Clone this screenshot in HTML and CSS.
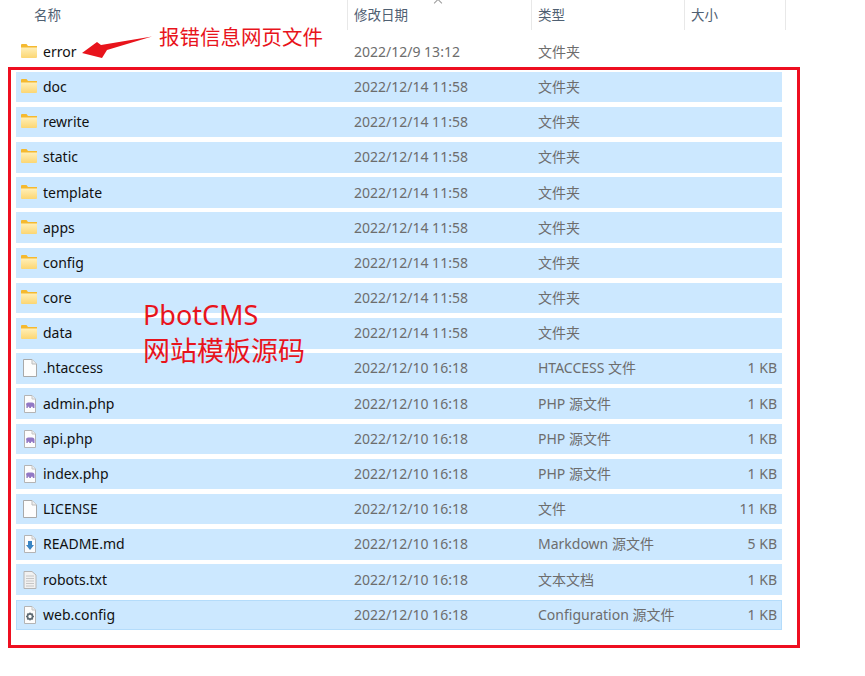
FILE: index.html
```html
<!DOCTYPE html>
<html lang="en">
<head>
    <meta charset="UTF-8">
    <meta name="viewport" content="width=device-width, initial-scale=1.0">
    <title>PbotCMS 文件列表</title>
    <link rel="stylesheet" href="styles.css">
</head>
<body>
    <!-- Icon sheet -->
    <svg class="icon-sheet" width="0" height="0">
        <defs>
            <linearGradient id="folderFill" x1="0" y1="0" x2="0" y2="1">
                <stop offset="0" stop-color="#ffefb8"/>
                <stop offset="1" stop-color="#fcd672"/>
            </linearGradient>
            <symbol id="i-folder" viewBox="0 0 16 14">
                <path d="M0 1 Q0 0 1 0 H5.5 L7 2 H16 V5 H0 Z" fill="#f5b92f"/>
                <path d="M0 3.5 H16 V13 Q16 14 15 14 H1 Q0 14 0 13 Z" fill="url(#folderFill)"/>
            </symbol>
            <symbol id="i-file" viewBox="0 0 14 18">
                <path d="M0.5 0.5 H9 L13.5 5 V17.5 H0.5 Z" fill="#fdfdfd" stroke="#a9a9a9"/>
                <path d="M9 0.5 V5 H13.5" fill="#eeeeee" stroke="#bdbdbd"/>
            </symbol>
            <symbol id="i-php" viewBox="0 0 14 18">
                <path d="M1.5 0.5 H9 L12.5 4 V17.5 H1.5 Z" fill="#fdfdfd" stroke="#b4b4b4"/>
                <path d="M9 0.5 V4 H12.5" fill="#eeeeee" stroke="#c4c4c4"/>
                <path d="M3 9 Q3.5 7 6 7.5 H9 Q11.5 7.5 11.5 10 V13 H9.8 V11.8 H8 V13 H6.2 V11.8 H4.8 V13 H3.4 V10.5 Z" fill="#9278c4"/>
            </symbol>
            <symbol id="i-md" viewBox="0 0 14 18">
                <path d="M1.5 0.5 H9 L12.5 4 V17.5 H1.5 Z" fill="#fdfdfd" stroke="#b4b4b4"/>
                <path d="M9 0.5 V4 H12.5" fill="#eeeeee" stroke="#c4c4c4"/>
                <path d="M5 6 H9 V10 H11 L7 15 L3 10 H5 Z" fill="#3b86c4"/>
            </symbol>
            <symbol id="i-txt" viewBox="0 0 14 18">
                <path d="M1 0.5 H9 L13 4 V17.5 H1 Z" fill="#f1f1f1" stroke="#b4b4b4"/>
                <path d="M3 5 H11 M3 7.5 H11 M3 10 H11 M3 12.5 H11 M3 15 H11" stroke="#c6c6c6"/>
            </symbol>
            <symbol id="i-config" viewBox="0 0 14 18">
                <path d="M1.5 0.5 H9 L12.5 4 V17.5 H1.5 Z" fill="#fdfdfd" stroke="#b4b4b4"/>
                <path d="M9 0.5 V4 H12.5" fill="#eeeeee" stroke="#c4c4c4"/>
                <circle cx="7" cy="10.5" r="2.6" fill="none" stroke="#5f6b73" stroke-width="1.8"/>
                <path d="M7 6.5 V8 M7 13 V14.5 M3 10.5 H4.5 M9.5 10.5 H11 M4.2 7.7 L5.2 8.7 M8.8 12.3 L9.8 13.3 M9.8 7.7 L8.8 8.7 M5.2 12.3 L4.2 13.3" stroke="#5f6b73" stroke-width="1.2"/>
            </symbol>
        </defs>
    </svg>

    <div class="explorer">
        <div class="list-header">
            <div class="col-head col-name">名称</div>
            <div class="col-head col-date">修改日期<span class="sort-caret"></span></div>
            <div class="col-head col-type">类型</div>
            <div class="col-head col-size">大小</div>
        </div>

        <div class="row row-plain">
            <svg class="icon icon-folder"><use href="#i-folder"/></svg>
            <span class="name">error</span><span class="date">2022/12/9 13:12</span><span class="type">文件夹</span><span class="size"></span>
        </div>

        <div class="row">
            <svg class="icon icon-folder"><use href="#i-folder"/></svg>
            <span class="name">doc</span><span class="date">2022/12/14 11:58</span><span class="type">文件夹</span><span class="size"></span>
        </div>
        <div class="row">
            <svg class="icon icon-folder"><use href="#i-folder"/></svg>
            <span class="name">rewrite</span><span class="date">2022/12/14 11:58</span><span class="type">文件夹</span><span class="size"></span>
        </div>
        <div class="row">
            <svg class="icon icon-folder"><use href="#i-folder"/></svg>
            <span class="name">static</span><span class="date">2022/12/14 11:58</span><span class="type">文件夹</span><span class="size"></span>
        </div>
        <div class="row">
            <svg class="icon icon-folder"><use href="#i-folder"/></svg>
            <span class="name">template</span><span class="date">2022/12/14 11:58</span><span class="type">文件夹</span><span class="size"></span>
        </div>
        <div class="row">
            <svg class="icon icon-folder"><use href="#i-folder"/></svg>
            <span class="name">apps</span><span class="date">2022/12/14 11:58</span><span class="type">文件夹</span><span class="size"></span>
        </div>
        <div class="row">
            <svg class="icon icon-folder"><use href="#i-folder"/></svg>
            <span class="name">config</span><span class="date">2022/12/14 11:58</span><span class="type">文件夹</span><span class="size"></span>
        </div>
        <div class="row">
            <svg class="icon icon-folder"><use href="#i-folder"/></svg>
            <span class="name">core</span><span class="date">2022/12/14 11:58</span><span class="type">文件夹</span><span class="size"></span>
        </div>
        <div class="row">
            <svg class="icon icon-folder"><use href="#i-folder"/></svg>
            <span class="name">data</span><span class="date">2022/12/14 11:58</span><span class="type">文件夹</span><span class="size"></span>
        </div>
        <div class="row">
            <svg class="icon icon-doc"><use href="#i-file"/></svg>
            <span class="name">.htaccess</span><span class="date">2022/12/10 16:18</span><span class="type">HTACCESS 文件</span><span class="size">1 KB</span>
        </div>
        <div class="row">
            <svg class="icon icon-doc"><use href="#i-php"/></svg>
            <span class="name">admin.php</span><span class="date">2022/12/10 16:18</span><span class="type">PHP 源文件</span><span class="size">1 KB</span>
        </div>
        <div class="row">
            <svg class="icon icon-doc"><use href="#i-php"/></svg>
            <span class="name">api.php</span><span class="date">2022/12/10 16:18</span><span class="type">PHP 源文件</span><span class="size">1 KB</span>
        </div>
        <div class="row">
            <svg class="icon icon-doc"><use href="#i-php"/></svg>
            <span class="name">index.php</span><span class="date">2022/12/10 16:18</span><span class="type">PHP 源文件</span><span class="size">1 KB</span>
        </div>
        <div class="row">
            <svg class="icon icon-doc"><use href="#i-file"/></svg>
            <span class="name">LICENSE</span><span class="date">2022/12/10 16:18</span><span class="type">文件</span><span class="size">11 KB</span>
        </div>
        <div class="row">
            <svg class="icon icon-doc"><use href="#i-md"/></svg>
            <span class="name">README.md</span><span class="date">2022/12/10 16:18</span><span class="type">Markdown 源文件</span><span class="size">5 KB</span>
        </div>
        <div class="row">
            <svg class="icon icon-doc"><use href="#i-txt"/></svg>
            <span class="name">robots.txt</span><span class="date">2022/12/10 16:18</span><span class="type">文本文档</span><span class="size">1 KB</span>
        </div>
        <div class="row row-focus">
            <svg class="icon icon-doc"><use href="#i-config"/></svg>
            <span class="name">web.config</span><span class="date">2022/12/10 16:18</span><span class="type">Configuration 源文件</span><span class="size">1 KB</span>
        </div>
    </div>

    <!-- Red annotations drawn over the screenshot -->
    <div class="mark-box"></div>
    <svg class="mark-arrow" width="76" height="26" viewBox="0 0 76 26">
        <path d="M1 20 L16 9 L20 12 L71 3.5 L26 17 L21 25 Z" fill="#e8141c"/>
    </svg>
    <div class="mark-label">报错信息网页文件</div>
    <div class="mark-note">PbotCMS<br>网站模板源码</div>
</body>
</html>
```

FILE: styles.css
```css
* {
    margin: 0;
    padding: 0;
    box-sizing: border-box;
}

body {
    font-family: 'Noto Sans', 'Noto Sans CJK SC', sans-serif;
    background: #ffffff;
    color: #6d6d6d;
    font-size: 14px;
    width: 865px;
    height: 676px;
    overflow: hidden;
    position: relative;
}

.icon-sheet {
    position: absolute;
}

/* Column header */
.list-header {
    display: grid;
    grid-template-columns: 347px 184px 153px 102px;
    height: 29px;
}

.col-head {
    position: relative;
    color: #4f6072;
    font-size: 13.5px;
    line-height: 30px;
    padding-left: 6px;
    border-left: 1px solid #e8e8e8;
}

.col-name {
    padding-left: 34px;
    border-left: none;
}

.col-size {
    border-right: 1px solid #e8e8e8;
}

.sort-caret {
    position: absolute;
    left: 87px;
    top: 0;
    width: 6px;
    height: 6px;
    border-left: 1px solid #9a9a9a;
    border-top: 1px solid #9a9a9a;
    transform: rotate(45deg);
}

/* File rows */
.row {
    display: grid;
    grid-template-columns: 27px 311px 184px 146px 98px;
    align-items: center;
    width: 766px;
    height: 30.5px;
    margin: 0 0 4.7px 16px;
    background: #cce8ff;
    line-height: 30px;
}

.row-plain {
    background: transparent;
    margin-top: 7.5px;
}

.row-focus {
    box-shadow: inset 0 0 0 1px #b4dcfb;
}

.icon {
    display: block;
    justify-self: start;
}

.icon-folder {
    width: 16px;
    height: 14px;
    margin: -2px 0 0 5px;
}

.icon-doc {
    width: 14px;
    height: 18px;
    margin-left: 7px;
}

.name {
    color: #111111;
}

.size {
    text-align: right;
    padding-right: 5px;
}

/* Annotations */
.mark-box {
    position: absolute;
    left: 8px;
    top: 67px;
    width: 792px;
    height: 581px;
    border: 3px solid #ee0f20;
}

.mark-arrow {
    position: absolute;
    left: 81px;
    top: 33px;
}

.mark-label {
    position: absolute;
    left: 159px;
    top: 22px;
    color: #e8141c;
    font-size: 20.5px;
    line-height: 30px;
    white-space: nowrap;
}

.mark-note {
    position: absolute;
    left: 143px;
    top: 297px;
    color: #e8141c;
    font-size: 27px;
    line-height: 36px;
    white-space: nowrap;
}
```
